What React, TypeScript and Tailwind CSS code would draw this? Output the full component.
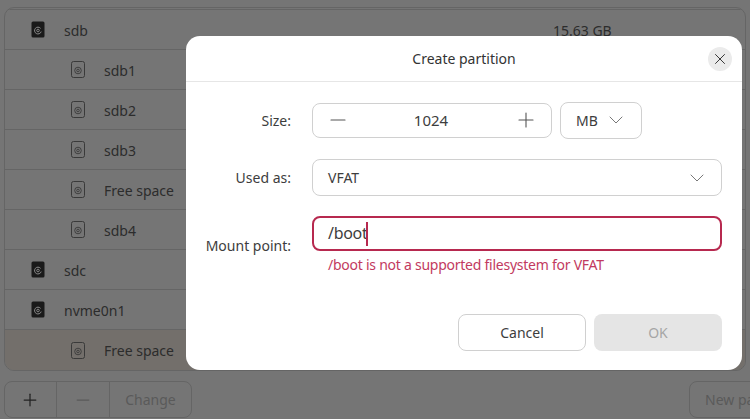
import { Minus, Plus, ChevronDown, X } from 'lucide-react'

const rows = [
  { name: 'sdb', child: false, size: '15.63 GB' },
  { name: 'sdb1', child: true },
  { name: 'sdb2', child: true },
  { name: 'sdb3', child: true },
  { name: 'Free space', child: true },
  { name: 'sdb4', child: true },
  { name: 'sdc', child: false },
  { name: 'nvme0n1', child: false },
  { name: 'Free space', child: true, selected: true },
]

function DiskIcon({ filled }: { filled: boolean }) {
  if (filled) {
    return (
      <svg width="14" height="17" viewBox="0 0 14 17" className="shrink-0">
        <rect x="0.5" y="0.5" width="13" height="16" rx="1.5" fill="#1a1a1a" />
        <path d="M9.6 7.4 A3.4 3.4 0 1 0 10.2 10.6" fill="none" stroke="#8c8c8c" strokeWidth="1" />
        <circle cx="7" cy="9.5" r="1.3" fill="none" stroke="#8c8c8c" strokeWidth="0.9" />
      </svg>
    )
  }
  return (
    <svg width="14" height="17" viewBox="0 0 14 17" className="shrink-0">
      <rect x="0.5" y="0.5" width="13" height="16" rx="2" fill="none" stroke="#3a3a3a" strokeWidth="1" />
      <circle cx="7" cy="9.5" r="3.3" fill="none" stroke="#3a3a3a" strokeWidth="0.9" />
      <circle cx="7" cy="9.5" r="1.3" fill="none" stroke="#3a3a3a" strokeWidth="0.9" />
    </svg>
  )
}

export default function App() {
  return (
    <div className="relative w-[750px] h-[419px] overflow-hidden bg-[#757575] text-[14px] text-[#2c2c2c] font-['Noto_Sans',sans-serif]">
      {/* page behind the dialog */}
      <div className="px-[4px] pt-[7px]">
        <div className="rounded-[10px] border border-[#656565] overflow-hidden">
          <div className="h-[2px] border-b border-[#656565]" />
          {rows.map((r, i) => (
            <div
              key={i}
              className={`flex items-center h-[40px] border-b last:border-b-0 border-[#656565] ${r.selected ? 'bg-[#736f6b]' : ''}`}
            >
              <div className={`flex items-center gap-[19px] ${r.child ? 'pl-[66px]' : 'pl-[26px]'}`}>
                <DiskIcon filled={!r.child} />
                <span className={r.selected ? 'pt-[1px]' : 'pt-[2px]'}>{r.name}</span>
              </div>
              {r.size && <span className="absolute left-[553px] pt-[2px]">{r.size}</span>}
            </div>
          ))}
        </div>
        <div className="flex justify-between mt-[10px]">
          <div className="flex h-[37px] w-[188px] rounded-[8px] border border-[#656565]">
            <div className="w-[52px] flex items-center justify-center border-r border-[#656565] pr-[2px]">
              <Plus size={20} strokeWidth={1.5} color="#222" />
            </div>
            <div className="w-[53px] flex items-center justify-center border-r border-[#656565]">
              <Minus size={20} strokeWidth={1.5} color="#5a5a5a" />
            </div>
            <div className="flex-1 flex items-center justify-center text-[#5a5a5a] pb-[1px]">Change</div>
          </div>
          <div className="flex items-center h-[37px] w-[120px] -mr-[63px] pl-[15px] pb-[1px] rounded-[8px] border border-[#656565] text-[#5a5a5a] whitespace-nowrap">
            New partition
          </div>
        </div>
      </div>

      {/* dialog */}
      <div className="absolute left-[186px] top-[36px] w-[556px] h-[334px] bg-white rounded-[14px]">
        <div className="relative flex items-center justify-center h-[46px] border-b border-[#e6e6e6] text-[#333]">
          Create partition
          <div className="absolute right-[10px] top-[11px] w-[24px] h-[24px] rounded-full bg-[#ebebeb] flex items-center justify-center">
            <X size={18} strokeWidth={1.3} color="#333" />
          </div>
        </div>

        <div className="pt-[20px] pr-[20px] text-[#3d3d3d]">
          <div className="flex items-center h-[36px]">
            <div className="w-[105px] text-right">Size:</div>
            <div className="ml-[21px] flex items-center justify-between w-[240px] h-[35px] px-[13px] rounded-[8px] border border-[#d0d0d0]">
              <Minus size={24} strokeWidth={1.1} color="#555" />
              <span className="text-[15px] -ml-[2px]">1024</span>
              <Plus size={24} strokeWidth={1.1} color="#555" />
            </div>
            <div className="ml-[8px] flex items-center gap-[6px] w-[82px] h-[37px] pl-[15px] rounded-[8px] border border-[#d0d0d0]">
              <span>MB</span>
              <ChevronDown size={24} strokeWidth={0.8} color="#555" />
            </div>
          </div>

          <div className="flex items-center h-[37px] mt-[21px]">
            <div className="w-[105px] text-right">Used as:</div>
            <div className="ml-[21px] flex items-center justify-between w-[410px] h-[37px] pl-[15px] pr-[12px] rounded-[8px] border border-[#d0d0d0]">
              <span>VFAT</span>
              <ChevronDown size={24} strokeWidth={0.8} color="#555" />
            </div>
          </div>

          <div className="flex items-center mt-[20px]">
            <div className="w-[105px] text-right">Mount point:</div>
            <div className="ml-[21px] w-[410px]">
              <div className="flex items-center h-[35px] px-[14px] rounded-[8px] border-2 border-[#b7294f] text-[16px]">
                <span className="tracking-[-0.3px] pb-[1px]">/boot</span>
                <span className="w-[2px] h-[24px] -ml-[1px] bg-[#b7294f]" />
              </div>
              <div className="mt-[4px] pl-[16px] text-[#c23a60] h-[20px] leading-[20px] tracking-[-0.25px]">
                /boot is not a supported filesystem for VFAT
              </div>
            </div>
          </div>

          <div className="flex justify-end gap-[8px] mt-[39px]">
            <div className="flex items-center justify-center w-[128px] h-[37px] rounded-[8px] border border-[#d0d0d0]">Cancel</div>
            <div className="flex items-center justify-center w-[128px] h-[37px] rounded-[8px] bg-[#e5e5e5] text-[#a5a5a5]">OK</div>
          </div>
        </div>
      </div>
    </div>
  )
}
